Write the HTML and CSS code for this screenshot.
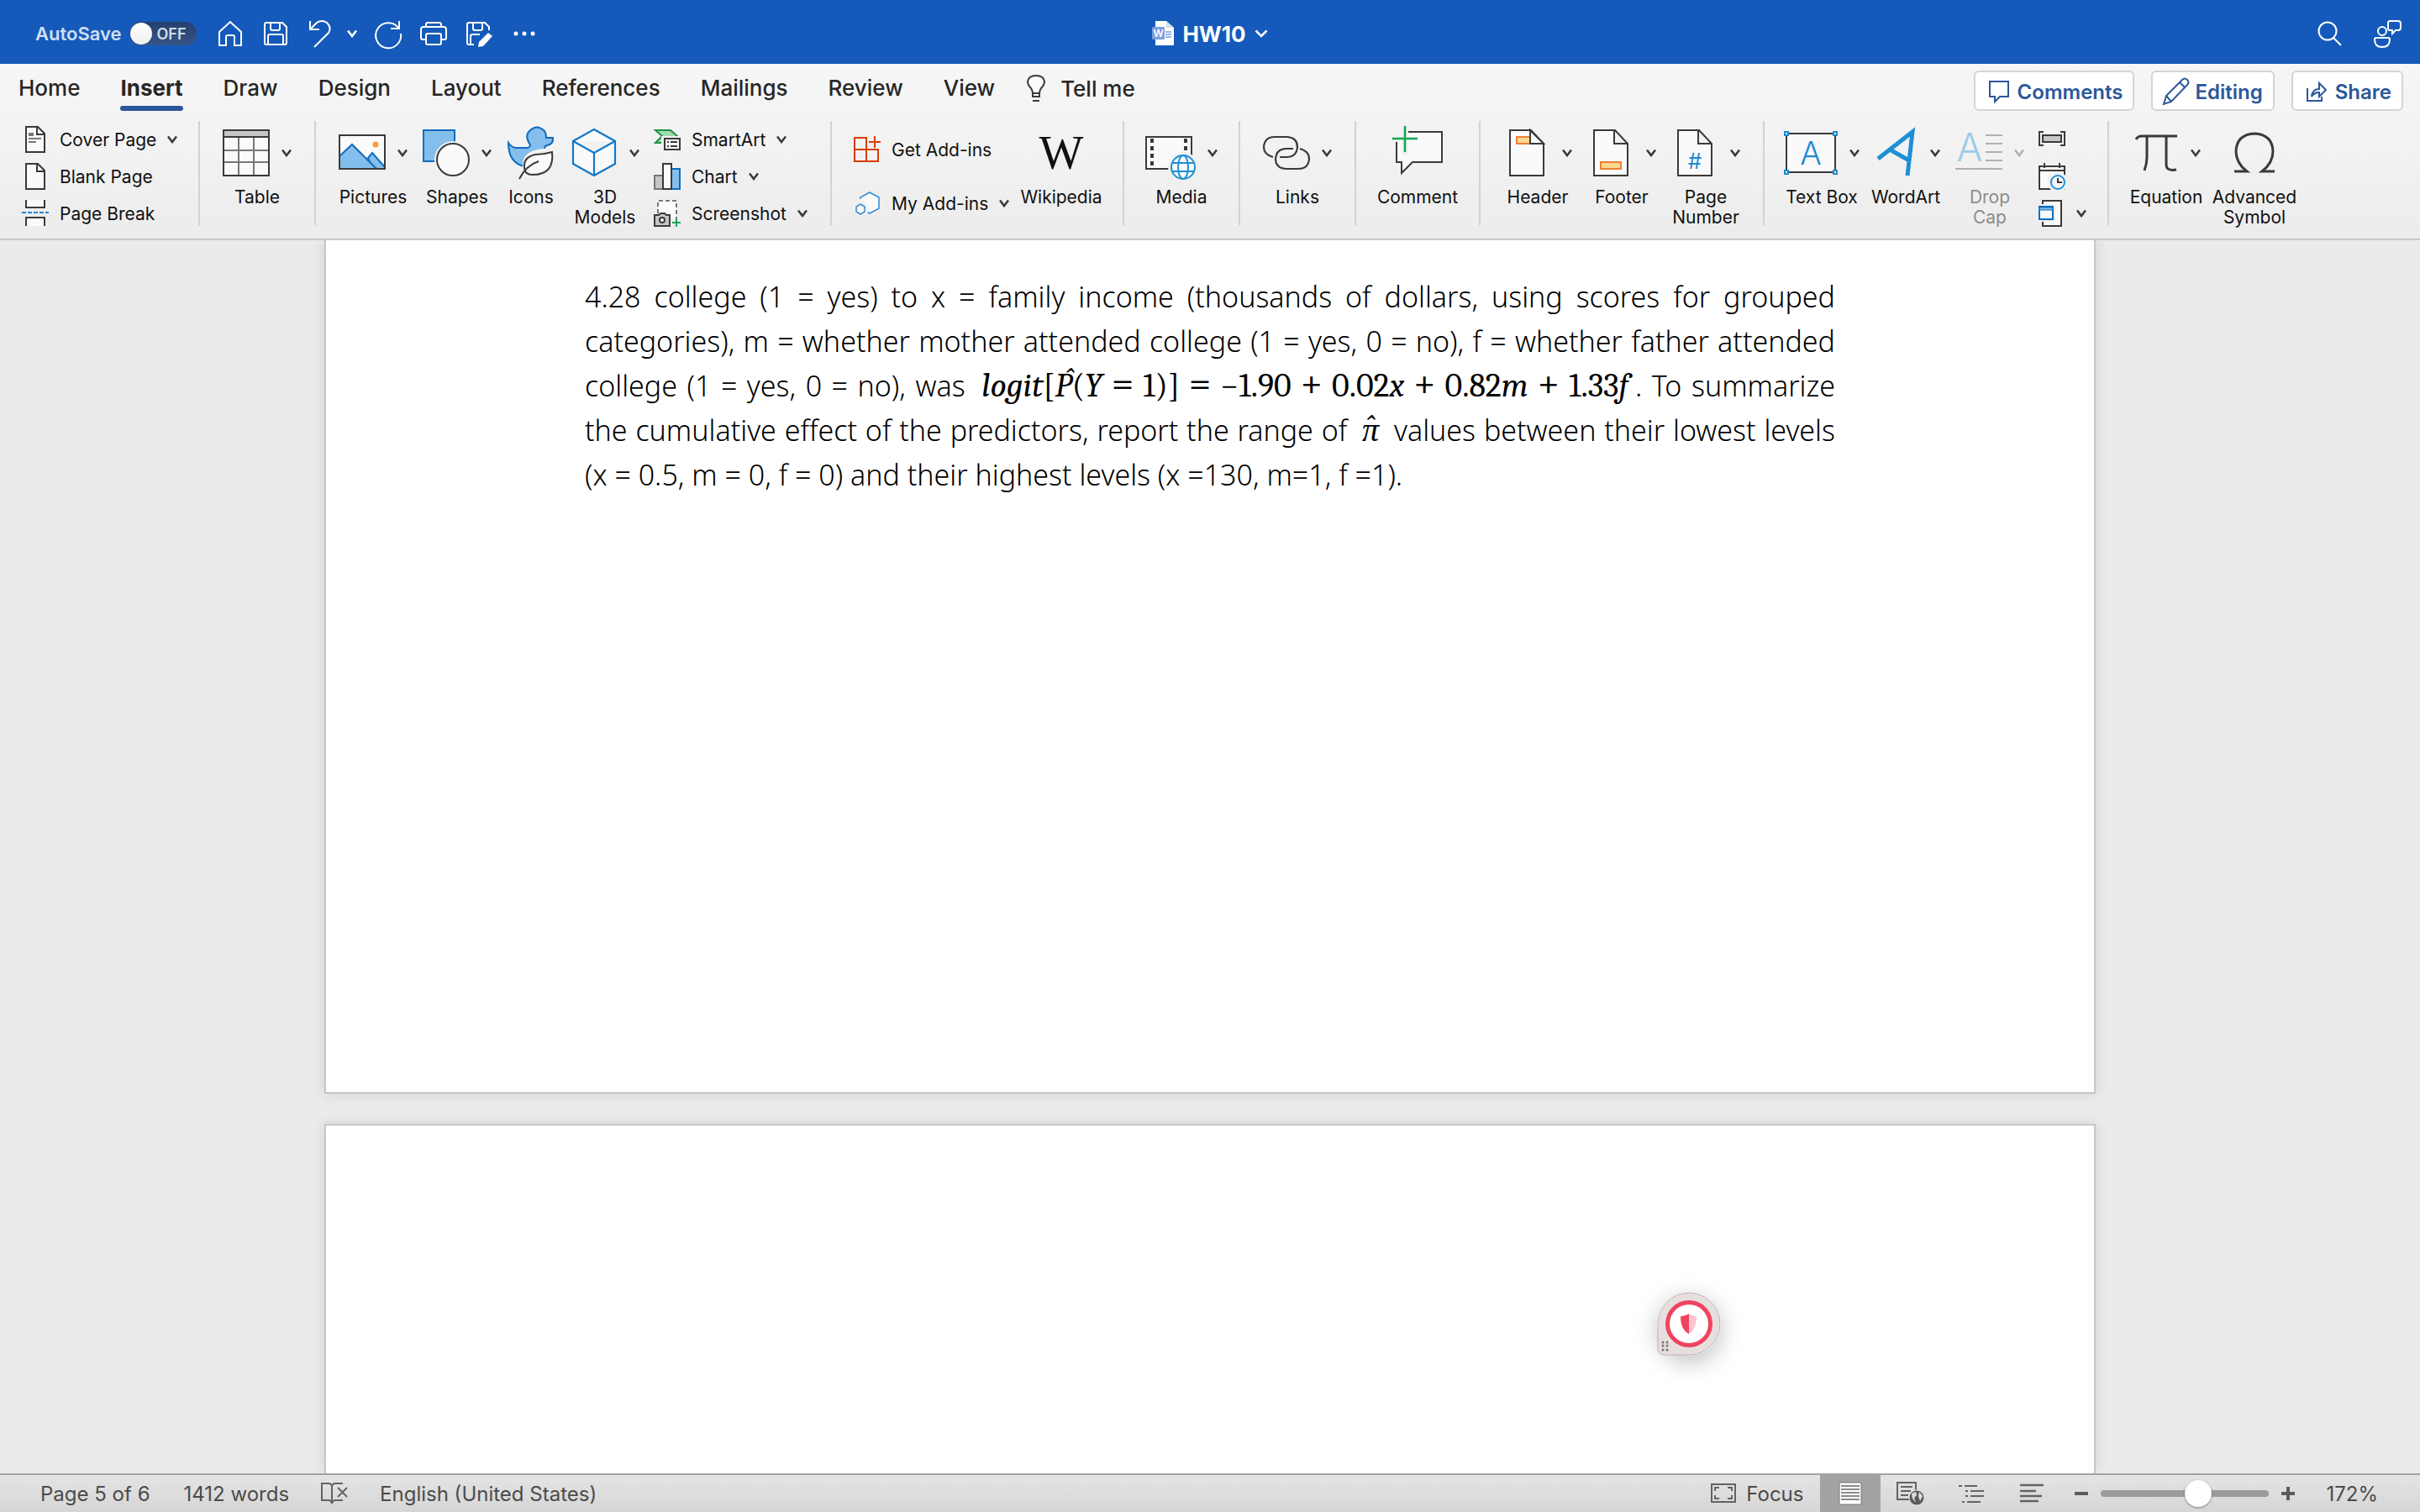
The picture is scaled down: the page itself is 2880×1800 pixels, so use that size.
FILE: index.html
```html
<!DOCTYPE html>
<html lang="en">
<head>
<meta charset="utf-8">
<title>HW10</title>
<link rel="stylesheet" href="styles.css">
</head>
<body>
<svg class="defs" aria-hidden="true">
  <symbol id="chev" viewBox="0 0 12 10"><path d="M1 1.5 6 8 11 1.5" fill="none" stroke="currentColor" stroke-width="2.6"/></symbol>
</svg>

<header class="titlebar">
  <div class="quick">
    <label class="autosave" for="autosave">AutoSave</label>
    <span class="toggle"><input type="checkbox" id="autosave"><span>OFF</span></span>
    <button class="qbtn" aria-label="Home"><svg width="32" height="32" viewBox="0 0 32 32"><path d="M3 14 16 2l13 12v16h-8V20q0-2-2-2h-6q-2 0-2 2v10H3z"/></svg></button>
    <button class="qbtn" aria-label="Save"><svg width="32" height="32" viewBox="0 0 32 32"><path d="M5 3h19l5 5v19q0 2-2 2H5q-2 0-2-2V5q0-2 2-2zM10 3v7q0 2 2 2h7q2 0 2-2V3M7 29V19q0-2 2-2h14q2 0 2 2v10"/></svg></button>
    <button class="qbtn undo" aria-label="Undo"><svg width="30" height="34" viewBox="0 0 30 34"><path d="M4 2v10h11M4 12 12 4q6-4 12 0 6 6 2 12L9 33"/></svg><svg class="chev" width="12" height="10"><use href="#chev"/></svg></button>
    <button class="qbtn" aria-label="Repeat"><svg width="34" height="34" viewBox="0 0 34 34"><path d="M30 2v9H20M29 10A15 15 0 1 0 32 17"/></svg></button>
    <button class="qbtn" aria-label="Print"><svg width="34" height="32" viewBox="0 0 34 32"><path d="M8 8V5q0-2 2-2h14q2 0 2 2v3M8 23H4q-2 0-2-2V11q0-3 3-3h24q3 0 3 3v10q0 2-2 2h-4M10 16h14q2 0 2 2v9q0 2-2 2H10q-2 0-2-2v-9q0-2 2-2z"/></svg></button>
    <button class="qbtn" aria-label="Save as"><svg width="34" height="32" viewBox="0 0 34 32"><path d="M29 12V8l-5-5H5Q3 3 3 5v22q0 2 2 2h6M10 3v7q0 2 2 2h7q2 0 2-2V3M7 29V19q0-2 2-2h9"/><path class="solid" d="M28 15l5 4-11 12-6 1 1-6z"/></svg></button>
    <button class="qbtn" aria-label="More"><svg width="28" height="32" viewBox="0 0 28 32"><g class="solid"><circle cx="4" cy="16" r="2.5"/><circle cx="14" cy="16" r="2.5"/><circle cx="24" cy="16" r="2.5"/></g></svg></button>
  </div>
  <button class="doc-title">
    <svg width="26" height="30" viewBox="0 0 26 30"><path d="M4 0h13l9 8v21H4z" fill="#fff"/><path d="M17 0v8h9z" fill="#d5dfee"/><path d="M16 13h7M16 16h7M16 19h7" stroke="#6ea0e0" stroke-width="1.4"/><rect y="7" width="15" height="15" rx="1.500" fill="#7b9fdb"/><text x="7.500" y="19" font-size="12" text-anchor="middle" font-weight="600" fill="#fff">W</text></svg>
    <span>HW10</span>
    <svg width="16" height="10" viewBox="0 0 16 10"><path d="M1.500 1.500 8 8l6.500-6.500" fill="none" stroke="#fff" stroke-width="2.600"/></svg>
  </button>
  <div class="title-right">
    <button class="qbtn" aria-label="Search"><svg width="30" height="32" viewBox="0 0 30 32"><circle cx="12" cy="13" r="10.500"/><path d="M19 21l9 9"/></svg></button>
    <button class="qbtn" aria-label="Presence"><svg width="34" height="34" viewBox="0 0 34 34"><circle cx="11" cy="14" r="5"/><path d="M4 22h14q2 0 2 2 0 9-9 9t-9-9q0-2 2-2zM20 2h10q3 0 3 3v5q0 3-3 3h-3l-4 4v-4h-3q-2 0-2-3V5q0-3 2-3z"/></svg></button>
  </div>
</header>

<section class="ribbon">
  <div class="tabbar">
    <nav class="tabs">
      <button class="tab">Home</button>
      <button class="tab active">Insert</button>
      <button class="tab">Draw</button>
      <button class="tab">Design</button>
      <button class="tab">Layout</button>
      <button class="tab">References</button>
      <button class="tab">Mailings</button>
      <button class="tab">Review</button>
      <button class="tab">View</button>
    </nav>
    <button class="tell"><svg width="22" height="32" viewBox="0 0 22 32"><path d="M7 22q0-3-2-6-4-4-4-8 1-7 10-7t10 7q0 4-4 8-2 3-2 6v4H7zM7 22h8M7 31h8" fill="#fcfcfc" stroke="#3b3a38" stroke-width="2"/></svg>Tell me</button>
    <div class="actions">
      <button class="action"><svg width="24" height="26" viewBox="0 0 24 26"><path d="M1 1h22v18H13l-6 6v-6H1z"/></svg>Comments</button>
      <button class="action edit"><svg width="32" height="34" viewBox="0 0 32 34"><path d="M1 32l3-10L23 3q3-3 6 0t0 6L10 29zM4 22l6 7M20 6l6 6"/></svg>Editing</button>
      <button class="action"><svg width="24" height="26" viewBox="0 0 24 26"><path d="M1 9v15h17v-5M6 19q1-9 9-9V3l8 8-8 8v-5q-6 0-9 5z"/></svg>Share</button>
    </div>
  </div>

  <div class="tools">
    <div class="group">
      <div class="col">
        <button class="small"><svg width="32" height="32" viewBox="0 0 32 32"><path class="ink" d="M5 1h14l8 8v22H5zM18 1v9h9"/><path fill="#797775" d="M8 8h6v4H8z"/><path class="gray" d="M8 15h15M8 19h9"/></svg>Cover Page<svg class="chev" width="12" height="10"><use href="#chev"/></svg></button>
        <button class="small"><svg width="32" height="32" viewBox="0 0 32 32"><path class="ink" d="M5 1h14l8 8v22H5zM18 1v9h9"/></svg>Blank Page</button>
        <button class="small"><svg width="32" height="32" viewBox="0 0 32 32"><path class="ink" d="M5 0v9h22V0M5 31V21h22v10"/><path d="M0 15h32" stroke="#1e8ad2" stroke-width="2" stroke-dasharray="5 2"/></svg>Page Break</button>
      </div>
    </div>
    <span class="sep"></span>

    <div class="group">
      <button class="tool"><span class="face"><svg width="56" height="64" viewBox="0 0 56 64"><path class="ink" d="M1 5h54v54H1z"/><path d="M2 6h52v7H2z" fill="#c8c6c4"/><path class="gray" d="M2 29h52M2 43h52M19 14v44M37 14v44"/><path class="ink none" d="M1 13h54M1 5h54v54H1z"/></svg><svg class="chev" width="12" height="10"><use href="#chev"/></svg></span>Table</button>
    </div>
    <span class="sep"></span>

    <div class="group">
      <button class="tool"><span class="face"><svg width="56" height="64" viewBox="0 0 56 64"><path class="ink" d="M1 11h54v40H1z"/><circle cx="44" cy="22" r="3.500" fill="#ff9a3e"/><path class="blue" d="M35 38l5-6 15 17v2H40z"/><path class="blue" d="M1 36l15-14 29 29H1z"/><path class="ink none" d="M1 11h54v40H1z"/></svg><svg class="chev" width="12" height="10"><use href="#chev"/></svg></span>Pictures</button>
      <button class="tool"><span class="face"><svg width="56" height="64" viewBox="0 0 56 64"><path class="blue" d="M1 5h37v37H1z"/><circle cx="36" cy="40" r="22" fill="#f2f2f2"/><circle class="ink" cx="36" cy="40" r="19"/></svg><svg class="chev" width="12" height="10"><use href="#chev"/></svg></span>Shapes</button>
      <button class="tool narrow"><span class="face"><svg width="56" height="64" viewBox="0 0 56 64"><path class="blue" d="M1 20q4 6 10 6h13q5-2 2-5-6-10 1-16 8-7 16 0 3 3 3 9h8q1 8-7 9l-2 1q-1 5-6 8L20 48Q1 44 1 20z"/><path d="M55 27q-38-2-37 21l-5 13 6 3 5-5q31 4 31-32z" fill="#f2f2f2"/><path class="ink" d="M53 31q-10 3-20 3-14 3-13 15 0 9 10 9 26 0 23-27z"/><path class="ink none" d="M14 63q8-16 23-21"/></svg></span>Icons</button>
      <button class="tool"><span class="face"><svg width="56" height="64" viewBox="0 0 56 64"><path d="M28 4l25 14v27L28 59 3 45V18zM3 18l25 14 25-14M28 32v27" fill="#fafafa" stroke="#1279c9" stroke-width="2.200"/></svg><svg class="chev" width="12" height="10"><use href="#chev"/></svg></span>3D<br>Models</button>
      <div class="col">
        <button class="small"><svg width="32" height="32" viewBox="0 0 32 32"><path d="M2 5h18l8 7-8 8H2l8-8z" fill="#9fdcae" stroke="#1e9148" stroke-width="2"/><path d="M9 12h24v20H9z" fill="#f2f2f2"/><path class="ink" d="M13 15h18v13H13z"/><path class="ink none" d="M16 19h2m2 0h8M16 24h2m2 0h8"/></svg>SmartArt<svg class="chev" width="12" height="10"><use href="#chev"/></svg></button>
        <button class="small"><svg width="32" height="32" viewBox="0 0 32 32"><path d="M1 15h10v16H1z" fill="#c8c6c4" stroke="#797775" stroke-width="2"/><path class="blue" d="M21 7h10v24H21z"/><path class="ink" d="M11 1h10v30H11z"/></svg>Chart<svg class="chev" width="12" height="10"><use href="#chev"/></svg></button>
        <button class="small"><svg width="32" height="32" viewBox="0 0 32 32"><path d="M5 16V1h22v22" fill="#fafafa" stroke="#797775" stroke-width="2" stroke-dasharray="5 3"/><path d="M1 18h5l2-2h5l2 2h4v13H1z" fill="#c8c6c4" stroke="#3b3a38" stroke-width="2"/><circle class="ink" cx="10" cy="24" r="3"/><path d="M27 22v10M22 27h10" stroke="#10a853" stroke-width="2"/></svg>Screenshot<svg class="chev" width="12" height="10"><use href="#chev"/></svg></button>
      </div>
    </div>
    <span class="sep"></span>

    <div class="group">
      <div class="col two">
        <button class="small"><svg width="32" height="32" viewBox="0 0 32 32"><path d="M1 2h14v14h14v14H1zM1 16h14v14M25 0v14M18 7h14" fill="none" stroke="#d83b01" stroke-width="2"/></svg>Get Add-ins</button>
        <button class="small"><svg width="32" height="32" viewBox="0 0 32 32"><path d="M19 3l11 6v13l-11 6-11-6V9z" fill="#fafafa" stroke="#3b8fd4" stroke-width="1.600"/><path d="M8 14l6 4v7l-6 4-6-4v-7z" fill="#fafafa" stroke="#f1f1f1" stroke-width="6"/><path d="M8 17l5 3v6l-5 3-5-3v-6z" fill="#fafafa" stroke="#3b8fd4" stroke-width="1.600"/></svg>My Add-ins<svg class="chev" width="12" height="10"><use href="#chev"/></svg></button>
      </div>
      <button class="tool wide"><span class="face wiki">W</span>Wikipedia</button>
    </div>
    <span class="sep"></span>

    <div class="group">
      <button class="tool"><span class="face"><svg width="60" height="64" viewBox="0 0 60 64"><path class="ink" d="M1 13h54v38H1z"/><path d="M8 15v36M48 15v16" stroke="#3b3a38" stroke-width="4" stroke-dasharray="5 4"/><circle cx="45" cy="49" r="18" fill="#f1f1f1"/><g fill="#fafafa" stroke="#1e8fd6" stroke-width="2"><circle cx="45" cy="49" r="14"/><ellipse cx="45" cy="49" rx="6" ry="14"/><path d="M32 44h26M32 54h26"/></g></svg><svg class="chev" width="12" height="10"><use href="#chev"/></svg></span>Media</button>
    </div>
    <span class="sep"></span>

    <div class="group">
      <button class="tool"><span class="face"><svg width="56" height="64" viewBox="0 0 56 64"><g fill="none" stroke="#3b3a38" stroke-width="2.200"><path d="M12 37Q1 34 1 25 2 13 14 13h15q12 1 12 12-1 12-13 12h-8"/><path d="M44 27q11 3 11 12-1 12-13 12H27q-12-1-12-12 1-12 13-12h8"/></g></svg><svg class="chev" width="12" height="10"><use href="#chev"/></svg></span>Links</button>
    </div>
    <span class="sep"></span>

    <div class="group">
      <button class="tool wide"><span class="face"><svg width="62" height="64" viewBox="0 0 62 64"><path class="ink" d="M20 7h40v36H25L12 56V43H6V19"/><path d="M16 4v30" stroke="#f1f1f1" stroke-width="7"/><path d="M16 0v31M1 15h30" stroke="#10a853" stroke-width="2.600"/></svg></span>Comment</button>
    </div>
    <span class="sep"></span>

    <div class="group">
      <button class="tool"><span class="face"><svg width="56" height="64" viewBox="0 0 56 64"><path class="ink" d="M8 5h25l15 16v38H8z"/><path class="orange" d="M16 13h20v8H16z"/><path class="ink" d="M32 5v16h16z"/></svg><svg class="chev" width="12" height="10"><use href="#chev"/></svg></span>Header</button>
      <button class="tool"><span class="face"><svg width="56" height="64" viewBox="0 0 56 64"><path class="ink" d="M8 5h25l15 16v38H8zM32 5v16h16"/><path class="orange" d="M16 43h24v8H16z"/></svg><svg class="chev" width="12" height="10"><use href="#chev"/></svg></span>Footer</button>
      <button class="tool"><span class="face"><svg width="56" height="64" viewBox="0 0 56 64"><path class="ink" d="M8 5h25l15 16v38H8zM32 5v16h16"/><text x="28" y="51" font-size="26" text-anchor="middle" fill="#1e8ad2">#</text></svg><svg class="chev" width="12" height="10"><use href="#chev"/></svg></span>Page<br>Number</button>
    </div>
    <span class="sep"></span>

    <div class="group">
      <button class="tool"><span class="face"><svg width="64" height="64" viewBox="0 0 64 64"><path class="ink" d="M3 9h58v46H3z"/><text x="32" y="46" font-size="38" font-weight="300" text-anchor="middle" fill="#1e8ad2">A</text><path d="M1 7h4v4H1zM59 7h4v4h-4zM1 53h4v4H1zM59 53h4v4h-4z" fill="#fafafa" stroke="#1e8ad2" stroke-width="2"/></svg><svg class="chev" width="12" height="10"><use href="#chev"/></svg></span>Text Box</button>
      <button class="tool"><span class="face"><svg width="56" height="64" viewBox="0 0 56 64"><path d="M8 39 49 7 43 59M22 28l23 13" fill="none" stroke="#1e8fd6" stroke-width="5"/></svg><svg class="chev" width="12" height="10"><use href="#chev"/></svg></span>WordArt</button>
      <button class="tool" disabled><span class="face"><svg width="56" height="64" viewBox="0 0 56 64"><text x="17" y="42" font-size="46" font-weight="300" text-anchor="middle" fill="#9dcbe8">A</text><path d="M36 11h20M36 21h20M36 31h20M36 41h20M0 51h56" stroke="#b0b0b0" stroke-width="2"/></svg><svg class="chev" width="12" height="10"><use href="#chev"/></svg></span>Drop<br>Cap</button>
      <div class="col slim">
        <button class="small" aria-label="Field"><svg width="32" height="32" viewBox="0 0 32 32"><path class="ink none" d="M6 7H1v16h5M26 7h5v16h-5"/><path d="M5 11h22v8H5z" fill="#c8c6c4" stroke="#3b3a38" stroke-width="2"/></svg></button>
        <button class="small" aria-label="Date and time"><svg width="32" height="32" viewBox="0 0 32 32"><path class="ink" d="M1 4h30v27H1zM1 9h30M7 0v6M25 0v6"/><circle cx="23" cy="23" r="12" fill="#f1f1f1"/><circle cx="23" cy="23" r="8" fill="#fafafa" stroke="#1e8fd6" stroke-width="2"/><path class="ink none" d="M23 18v5h5"/></svg></button>
        <button class="small" aria-label="Object"><svg width="32" height="32" viewBox="0 0 32 32"><path class="ink" d="M5 1h22v30H5z"/><path d="M0 5h20v21H0z" fill="#f1f1f1"/><path d="M1 8h16v15H1z" fill="#fafafa" stroke="#0f6cbd" stroke-width="2"/><path d="M1 9h16v3H1z" fill="#83beec" stroke="#0f6cbd"/></svg><svg class="chev" width="12" height="10"><use href="#chev"/></svg></button>
      </div>
    </div>
    <span class="sep"></span>

    <div class="group">
      <button class="tool"><span class="face"><svg width="56" height="64" viewBox="0 0 56 64"><path d="M5 16q2-4 7-4h42M18 12v25q0 8-3 16M41 12v34q0 8 12 6" fill="none" stroke="#3b3a38" stroke-width="3"/></svg><svg class="chev" width="12" height="10"><use href="#chev"/></svg></span>Equation</button>
      <button class="tool wide"><span class="face"><svg width="56" height="64" viewBox="0 0 56 64"><path d="M4 54h15q-13-10-13-24Q7 10 28 9q21 1 22 21 0 14-13 24h15" fill="none" stroke="#3b3a38" stroke-width="3"/></svg></span>Advanced<br>Symbol</button>
    </div>
  </div>
</section>

<main class="workspace">
  <article class="page first">
    <p class="para">
      <span class="line">4.28 college (1 = yes) to x = family income (thousands of dollars, using scores for grouped</span>
      <span class="line">categories), m = whether mother attended college (1 = yes, 0 = no), f = whether father attended</span>
      <span class="line">college (1 = yes, 0 = no), was <span class="math"><i>logit</i>[<i>P&#770;</i>(<i>Y</i> <b>=</b> 1)] <b>=</b> −1.90 <b>+</b> 0.02<i>x</i> <b>+</b> 0.82<i>m</i> <b>+</b> 1.33<i>f</i></span>. To summarize</span>
      <span class="line">the cumulative effect of the predictors, report the range of <span class="math"><i class="hat">π</i></span> values between their lowest levels</span>
      <span class="line last">(x = 0.5, m = 0, f = 0) and their highest levels (x =130, m=1, f =1).</span>
    </p>
  </article>
  <article class="page next"></article>
  <button class="badge" aria-label="Protection">
    <svg width="76" height="76" viewBox="0 0 76 76"><path d="M1 38a37 37 0 1 1 37 37H9q-8 0-8-8z" fill="#e6dfdd" stroke="#b9b5b4"/><circle cx="38" cy="38" r="25.500" fill="#fff" stroke="#f0435f" stroke-width="5"/><path d="M38 26q-5 3-10 3 0 16 10 21z" fill="#f0435f"/><path d="M38 26q5 3 9 3 0 16-9 21z" fill="#ffc2cf"/><g fill="#77706e"><circle cx="7" cy="60" r="1.500"/><circle cx="12" cy="60" r="1.500"/><circle cx="7" cy="64" r="1.500"/><circle cx="12" cy="64" r="1.500"/><circle cx="7" cy="69" r="1.500"/><circle cx="12" cy="69" r="1.500"/></g></svg>
  </button>
</main>

<footer class="status">
  <span class="pages">Page 5 of 6</span>
  <span class="words">1412 words</span>
  <button class="sbtn proof" aria-label="Proofing"><svg width="32" height="28" viewBox="0 0 32 28"><path d="M26 2h-9q-3 0-4 3-1-3-4-3H1v20h8q3 0 4 4 1-4 4-4h9M13 5v20M20 7l11 11M31 7 20 18"/></svg></button>
  <span class="lang">English (United States)</span>
  <span class="fill"></span>
  <button class="sbtn focus"><svg width="30" height="24" viewBox="0 0 30 24"><path d="M1 1h28v21H1zM5 9V5h5M20 5h5v4M25 14v4h-5M10 18H5v-4"/></svg>Focus</button>
  <button class="view on" aria-label="Print layout"><svg width="28" height="28" viewBox="0 0 28 28"><path d="M1 1h26v26H1z" fill="#fff" stroke="#777"/><path d="M3 5h22M3 9h22M3 13h22M3 17h22M3 21h22" stroke="#8a8a8a" stroke-width="2"/></svg></button>
  <button class="view" aria-label="Web layout"><svg width="34" height="30" viewBox="0 0 34 30"><path d="M1 2h22v20H1zM5 7h14M5 12h12M5 17h9" fill="none" stroke="#636363" stroke-width="2"/><circle cx="24" cy="20" r="9" fill="#5c5c5c" stroke="#dedede"/><path d="M18 15l5-2 1 4-3 3 2 6-4-5zM27 13l4 5-3 6-2-6z" fill="#dedede"/></svg></button>
  <button class="view" aria-label="Outline"><svg width="30" height="24" viewBox="0 0 30 24"><path d="M0 3h4M7 3h15M8 9h3M14 9h16M8 15h3M14 15h16M4 22h3M10 22h16" stroke="#636363" stroke-width="2"/></svg></button>
  <button class="view" aria-label="Draft"><svg width="28" height="24" viewBox="0 0 28 24"><path d="M0 2h28M0 9h19M0 15h26M0 21h22" stroke="#636363" stroke-width="2.400"/></svg></button>
  <button class="step" aria-label="Zoom out"><svg width="18" height="18" viewBox="0 0 18 18"><path d="M1 9h16" stroke="#5c5c5c" stroke-width="4"/></svg></button>
  <input class="zoom" type="range" min="0" max="100" value="59" aria-label="Zoom">
  <button class="step" aria-label="Zoom in"><svg width="18" height="18" viewBox="0 0 18 18"><path d="M1 9h16M9 1v16" stroke="#5c5c5c" stroke-width="4"/></svg></button>
  <span class="percent">172%</span>
</footer>
</body>
</html>
```
FILE: styles.css
```css
* { box-sizing: border-box; }

body {
  margin: 0;
  height: 100vh;
  display: flex;
  flex-direction: column;
  overflow: hidden;
  background: #ebebeb;
  color: #111;
  font-family: Inter, "Liberation Sans", sans-serif;
  font-size: 21px;
}

button {
  margin: 0;
  padding: 0;
  border: 0;
  background: none;
  color: inherit;
  font: inherit;
  white-space: nowrap;
}

svg { flex: none; display: block; overflow: visible; }
.defs { position: absolute; width: 0; height: 0; }

/* Title bar */
.titlebar {
  flex: none;
  display: grid;
  grid-template-columns: 1fr auto 1fr;
  align-items: center;
  height: 76px;
  padding: 4px 22px 0;
  background: #155aba;
  color: #fff;
}
.quick, .title-right { display: flex; align-items: center; }
.quick { gap: 20px; padding-left: 20px; }
.title-right { justify-content: flex-end; gap: 34px; }
.autosave { font-size: 22px; font-weight: 600; color: #cfdff3; margin-right: -11px; }
.toggle {
  display: flex;
  align-items: center;
  gap: 6px;
  width: 80px;
  height: 28px;
  margin-right: 3px;
  border-radius: 14px;
  background: linear-gradient(#24406d, #375486);
  color: #cfdaea;
  font-size: 18px;
  font-weight: 600;
}
.toggle input {
  appearance: none;
  width: 26px;
  height: 26px;
  margin: 0 0 0 1px;
  border-radius: 50%;
  background: linear-gradient(#fff, #eee);
}
.qbtn { display: flex; align-items: center; justify-content: center; gap: 18px; min-width: 34px; }
.qbtn svg { fill: none; stroke: #fff; stroke-width: 2; }
.qbtn svg.chev { stroke: none; }
.qbtn .solid { fill: #fff; stroke: none; }
.doc-title { display: flex; align-items: center; gap: 10px; font-size: 26px; font-weight: 700; }

/* Ribbon */
.ribbon {
  flex: none;
  border-bottom: 2px solid #c8c8c8;
  background: linear-gradient(#f6f6f6, #f2f2f2 50%, #ececec);
}
.tabbar { display: flex; align-items: flex-start; height: 68px; padding: 8px 20px 0 22px; }
.tabs { display: flex; gap: 48px; }
.tab {
  height: 48px;
  padding-top: 5px;
  font-size: 26px;
  font-weight: 500;
  line-height: 32px;
  color: #262626;
}
.tab::after { content: ""; display: block; height: 6px; margin-top: 5px; border-radius: 3px; }
.tab.active { font-weight: 700; }
.tab.active::after { background: #2b579a; }
.tell {
  display: flex;
  align-items: center;
  gap: 18px;
  height: 42px;
  margin-left: 38px;
  font-size: 26px;
  font-weight: 500;
  color: #262626;
}
.actions { display: flex; gap: 20px; margin-left: auto; }
.action {
  display: flex;
  align-items: center;
  gap: 10px;
  height: 48px;
  padding: 2px 12px 0 16px;
  border: 2px solid #d4d4d4;
  border-radius: 6px;
  background: #fff;
  color: #2b579a;
  font-size: 24px;
  font-weight: 600;
}
.action svg { fill: none; stroke: #2b579a; stroke-width: 2; }
.action.edit svg { margin: 0 -4px; }

.tools { display: flex; align-items: flex-start; height: 140px; }
.group { display: flex; padding: 0 18px; }
.sep { flex: none; width: 2px; height: 124px; background: #d2d2d2; }
.tool {
  display: flex;
  flex-direction: column;
  align-items: center;
  width: 100px;
  padding-top: 6px;
  line-height: 24px;
  text-align: center;
}
.tool.narrow { width: 76px; }
.tool.wide { width: 110px; }
.tool:disabled { color: #8c8c8c; }
.tool:disabled .chev { color: #b0b0b0; }
.face { display: flex; align-items: center; gap: 14px; height: 64px; margin-bottom: 9px; }
.wiki { font-family: "Liberation Serif", serif; font-size: 56px; }
.chev { color: #3b3a38; }
.qbtn .chev { color: #fff; }
.col { width: 200px; padding-left: 8px; }
.col.slim { width: 72px; }
.col.two { padding-top: 2px; }
.small { display: flex; align-items: center; gap: 13px; height: 44px; }
.col.two .small { height: 64px; }

.ink { fill: #fafafa; stroke: #3b3a38; stroke-width: 2; }
.none { fill: none; }
.gray { fill: none; stroke: #797775; stroke-width: 2; }
.blue { fill: #83beec; stroke: #0f6cbd; stroke-width: 2; }
.orange { fill: #fbd98f; stroke: #ee8133; stroke-width: 2; }

/* Document */
.workspace {
  position: relative;
  flex: 1;
  min-height: 0;
  display: flex;
  flex-direction: column;
  align-items: center;
  gap: 36px;
  overflow: hidden;
}
.page {
  width: 2108px;
  max-width: 100%;
  border: 2px solid #c6c6c6;
  background: #fff;
  box-shadow: 0 0 16px rgba(0, 0, 0, .12);
}
.page.first { flex: none; min-height: 1016px; padding: 41px 308px; border-top: 0; }
.page.next { flex: 1; border-bottom: 0; }
.para {
  margin: 0;
  font-family: "Noto Sans", sans-serif;
  font-weight: 350;
  font-size: 34px;
  line-height: 53px;
  color: #000;
}
.line { display: block; height: 53px; white-space: nowrap; text-align: justify; text-align-last: justify; }
.line.last { text-align-last: left; }
.math {
  display: inline-block;
  margin: 0 8px;
  font-family: Cambria, Caladea, "Liberation Serif", serif;
  font-size: 40px;
  font-weight: 400;
  line-height: 40px;
}
.math b { margin: 0 2px; font-size: 48px; font-weight: 400; line-height: 0; }
.hat { position: relative; }
.hat::after { content: "ˆ"; position: absolute; left: 4px; top: -2px; }

.badge {
  position: absolute;
  right: 832px;
  bottom: 140px;
  border-radius: 50%;
  box-shadow: 0 8px 28px rgba(0, 0, 0, .25);
}

/* Status bar */
.status {
  flex: none;
  display: flex;
  align-items: center;
  height: 46px;
  padding: 0 50px 0 48px;
  border-top: 2px solid #a3a3a3;
  background: linear-gradient(#e4e4e4, #d6d6d6);
  color: #4b4b4b;
  font-size: 24px;
}
.words { margin-left: 40px; }
.proof { margin: 0 38px; }
.fill { flex: 1; }
.sbtn { display: flex; align-items: center; gap: 12px; }
.sbtn svg { fill: none; stroke: #636363; stroke-width: 2; }
.focus { margin-right: 20px; }
.view { display: flex; align-items: center; justify-content: center; width: 72px; height: 44px; }
.view.on { background: #a3a3a3; }
.step { margin-left: 14px; }
.percent { margin-left: 36px; }
.zoom { appearance: none; width: 200px; height: 32px; margin: 0 0 0 14px; background: none; }
.zoom::-webkit-slider-runnable-track { height: 8px; border-radius: 4px; background: #9b9b9b; }
.zoom::-webkit-slider-thumb {
  appearance: none;
  width: 32px;
  height: 32px;
  margin-top: -12px;
  border-radius: 50%;
  background: #fff;
  box-shadow: 0 1px 3px rgba(0, 0, 0, .4);
}
```
